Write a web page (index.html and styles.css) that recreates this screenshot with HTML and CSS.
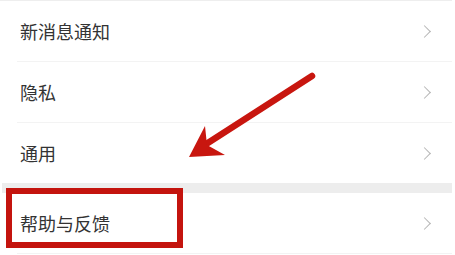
FILE: index.html
```html
<!DOCTYPE html>
<html lang="zh-CN">
<head>
    <meta charset="UTF-8">
    <meta name="viewport" content="width=device-width, initial-scale=1.0">
    <title>设置</title>
    <link rel="stylesheet" href="styles.css">
</head>
<body>
    <div class="page">
        <ul class="group first">
            <li class="row"><span>新消息通知</span><i class="chevron"></i></li>
            <li class="row"><span>隐私</span><i class="chevron"></i></li>
            <li class="row last"><span>通用</span><i class="chevron"></i></li>
        </ul>
        <div class="band"></div>
        <ul class="group">
            <li class="row"><span>帮助与反馈</span><i class="chevron"></i></li>
        </ul>

        <!--标注 -->
        <div class="highlight"></div>
        <svg class="arrow" width="455" height="255" viewBox="0 0 455 255">
            <line x1="312" y1="76" x2="200" y2="148" stroke="#c8160f" stroke-width="6.5" stroke-linecap="round"/>
            <polygon points="189,157 205,126 207,145 225,155" fill="#c8160f"/>
        </svg>
    </div>
</body>
</html>
```

FILE: styles.css
```css
body {
    margin: 0;
    background: #fff;
    font-family: "Noto Sans CJK SC", "Noto Sans", sans-serif;
}
.page {
    position: relative;
    width: 452px;
    height: 255px;
    overflow: hidden;
}
.group {
    list-style: none;
    margin: 0;
    padding: 0;
}
.group.first {
    border-top: 1px solid #eeeeee;
}
.row {
    height: 61px;
    margin-left: 17px;
    padding: 0 20px 0 3px;
    box-sizing: border-box;
    border-bottom: 1px solid #f3f3f3;
    display: flex;
    align-items: center;
    justify-content: space-between;
    font-size: 18px;
    color: #333;
}
.row.last {
    height: 60px;
    border-bottom: none;
}
.chevron {
    width: 8px;
    height: 8px;
    border-top: 1.5px solid #b5b5b5;
    border-right: 1.5px solid #b5b5b5;
    transform: rotate(45deg);
    margin-right: 3px;
}
.band {
    height: 10px;
    margin-left: 2px;
    background: #ededed;
}

/* 红框和箭头覆盖在列表上 */
.highlight {
    position: absolute;
    left: 6px;
    top: 188px;
    width: 177px;
    height: 60px;
    box-sizing: border-box;
    border: 6px solid #c4140e;
}
.arrow {
    position: absolute;
    left: 0;
    top: 0;
}
```
